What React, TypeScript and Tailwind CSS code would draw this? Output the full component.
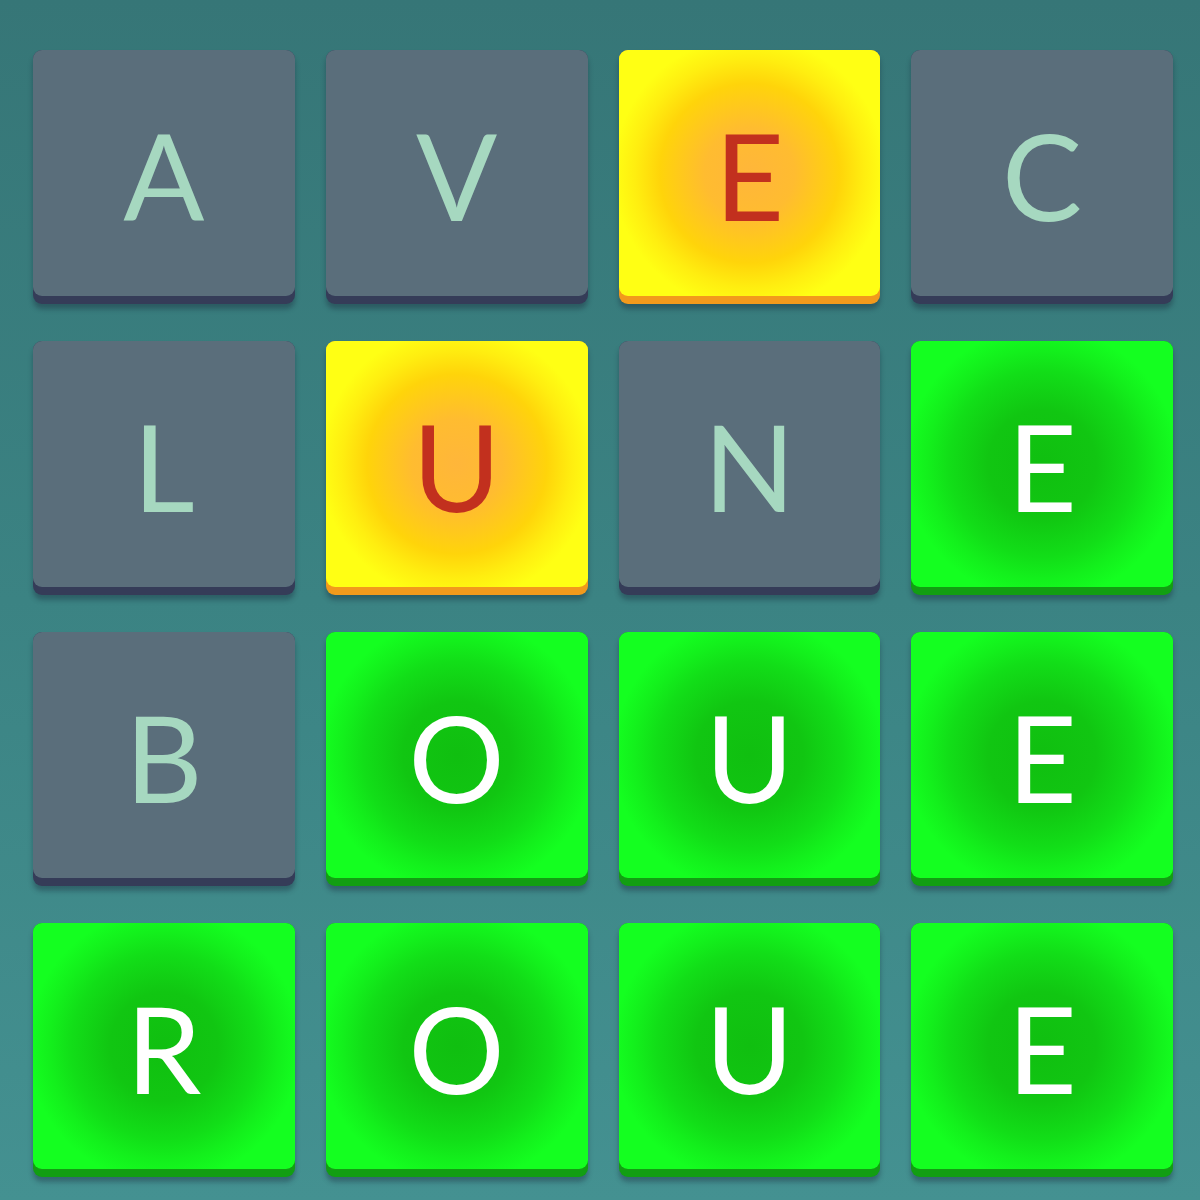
import React from "react";

type Kind = "gray" | "yellow" | "green";

const rows: [string, Kind][][] = [
  [["A", "gray"], ["V", "gray"], ["E", "yellow"], ["C", "gray"]],
  [["L", "gray"], ["U", "yellow"], ["N", "gray"], ["E", "green"]],
  [["B", "gray"], ["O", "green"], ["U", "green"], ["E", "green"]],
  [["R", "green"], ["O", "green"], ["U", "green"], ["E", "green"]],
];

function Tile({ letter, kind }: { letter: string; kind: Kind }) {
  const outer =
    kind === "gray"
      ? "bg-[#353c58]"
      : kind === "yellow"
      ? "bg-[#f29a1c]"
      : "bg-[#129e12]";
  const face =
    kind === "gray"
      ? "bg-[#5a6e7b]"
      : kind === "yellow"
      ? "bg-[radial-gradient(circle_at_center,#ffb63a_0%,#ffbc30_25%,#ffd40a_50%,#ffee10_64%,#ffff14_76%)]"
      : "bg-[radial-gradient(circle_at_center,#10bf10_0%,#11c612_30%,#12de18_52%,#13f01c_64%,#14ff20_76%)]";
  const text =
    kind === "gray"
      ? "text-[#a6d8c0]"
      : kind === "yellow"
      ? "text-[#c2301e]"
      : "text-white";
  return (
    <div
      className={`h-[254px] rounded-[9px] ${outer} pb-[8px] shadow-[0_5px_5px_rgba(20,30,50,0.35)]`}
    >
      <div
        className={`h-full rounded-[9px] ${face} flex items-center justify-center`}
      >
        <span
          className={`${text} text-[120px] leading-none font-normal pt-[4px]`}
          style={{ fontFamily: '"Lato", "Open Sans", sans-serif' }}
        >
          {letter}
        </span>
      </div>
    </div>
  );
}

export default function App() {
  return (
    <div className="w-[1200px] h-[1200px] overflow-hidden bg-[linear-gradient(180deg,#367677_0%,#3b8383_50%,#449191_100%)] pt-[50px] pl-[33px] pr-[27px]">
      <div className="grid grid-cols-4 gap-x-[31px] gap-y-[37px]">
        {rows.flat().map(([l, k], i) => (
          <Tile key={i} letter={l} kind={k} />
        ))}
      </div>
    </div>
  );
}
